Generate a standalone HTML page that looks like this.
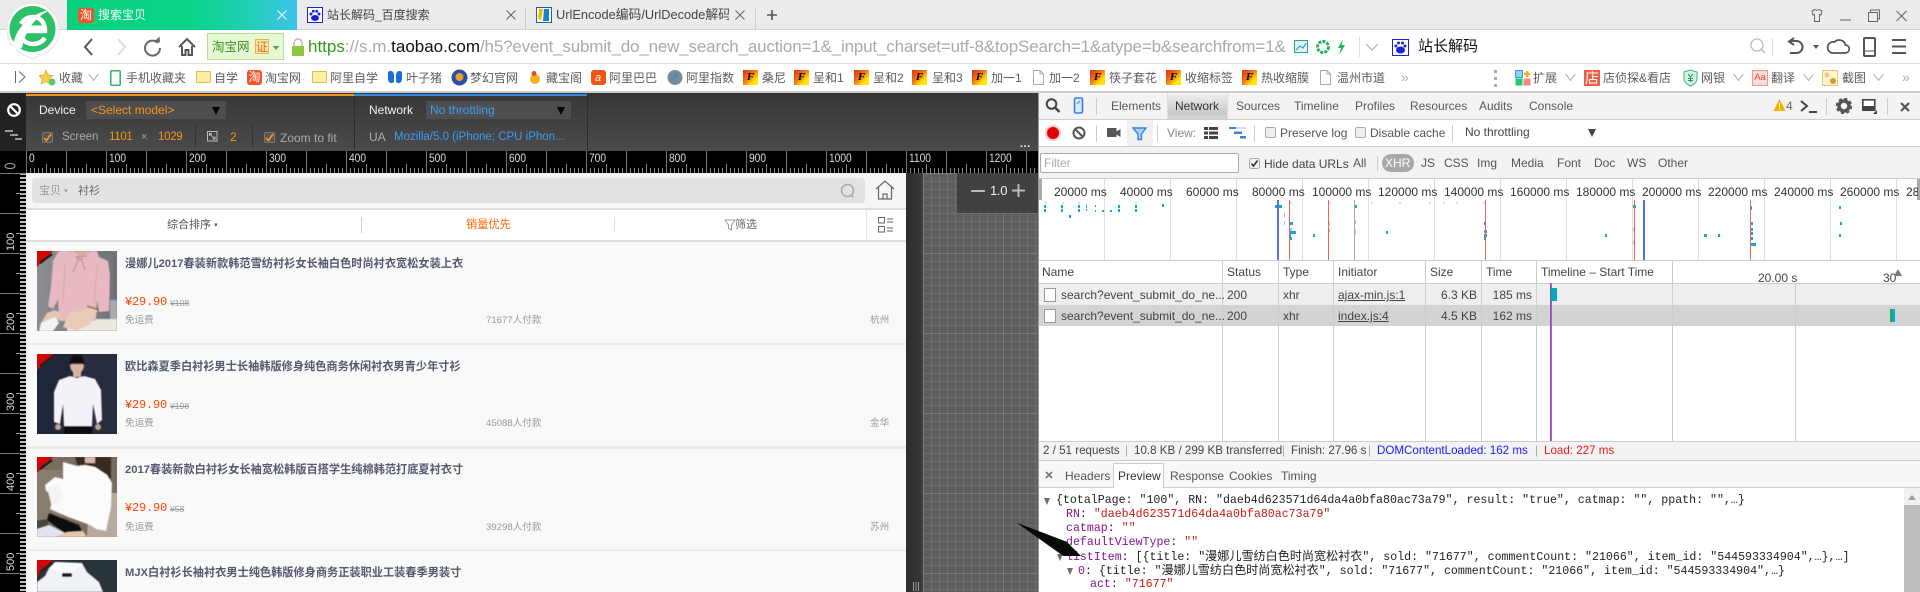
<!DOCTYPE html>
<html lang="zh"><head><meta charset="utf-8"><title>搜索宝贝</title>
<style>
html,body{margin:0;padding:0;width:1920px;height:592px;overflow:hidden;background:#fff}
body{position:relative;font-family:"Liberation Sans","Noto Sans CJK SC",sans-serif;font-size:12px;color:#555}
.a,.t,svg.a{position:absolute}
.t{white-space:nowrap;line-height:16px}
.b{font-size:12px;color:#5c5c5c}
.r{color:#ddd;font-size:12px;top:150px;transform:scaleX(.85);transform-origin:left top}
.v{color:#ddd;font-size:11px;transform:rotate(-90deg);transform-origin:left top;left:3px}
.tab{color:#5a5a5a;top:98px}
.cap{font-size:12px;color:#444}
.st{font-size:11.6px;top:443px;color:#444}
.ttl{font-size:11.2px;font-weight:bold;color:#525a6c;left:125px}
.pr{font-family:"Liberation Mono","Noto Sans CJK SC",monospace;font-size:12px;color:#f40;left:125px;letter-spacing:-.2px}
.op{font-size:8.6px;color:#999;text-decoration:line-through}
.g{font-size:9.6px;color:#999}
.m{font:11.6px/14px "Liberation Mono","Noto Sans CJK SC",monospace;color:#222;white-space:pre;position:absolute}
.m b{font-weight:normal;color:#881391}.m u{text-decoration:none;color:#c41a16}.m span{font-size:12.1px}
.tri{position:absolute;width:0;height:0;border-left:3.5px solid transparent;border-right:3.5px solid transparent;border-top:7px solid #6e6e6e}
.hl{position:absolute;width:1px;background:#ccc}
.sep{position:absolute;width:1px;background:#ccc}
.item{position:absolute;left:26px;width:880px;height:2px;background:#ececec}
.yi{position:absolute;width:15px;height:15px;top:70px;background:linear-gradient(135deg,#e02a10 0,#f47a10 45%,#ffe600 75%);color:#000;font:bold 11px/15px "Liberation Serif",serif;text-align:center;font-style:italic}
.fo{position:absolute;top:71px;width:15px;height:12px;background:#fdf0a0;border:1px solid #dcbc58;border-radius:1px;box-sizing:border-box}
.tb{position:absolute;background:#f0552a;border-radius:3px;color:#fff;font-size:12px;line-height:15px;text-align:center;width:16px;height:15px}
.cv{color:#999;font-size:9px;top:70px;transform:scaleX(1.5)}
</style></head><body>

<!-- tab strip -->
<div class="a" style="left:0;top:0;width:1920px;height:30px;background:#ebebeb;border-bottom:1px solid #d4d4d4;box-sizing:border-box"></div>
<div class="a" style="left:67px;top:0;width:230px;height:30px;background:linear-gradient(90deg,#08d07c 0,#0bd48a 55%,#22cfb8 80%,#3cc3ea 100%)"></div>
<div class="tb" style="left:78px;top:8px">淘</div>
<div class="t" style="left:98px;top:7px;color:#fff">搜索宝贝</div>
<svg class="a" style="left:276px;top:9px" width="12" height="12"><path d="M1.5 1.5l9 9M10.5 1.5l-9 9" stroke="#fff" stroke-width="1"/></svg>
<svg class="a" style="left:307px;top:7px" width="16" height="16"><rect x=".5" y=".5" width="15" height="15" fill="#fff" stroke="#1a23d4"/><g fill="#1a23d4"><ellipse cx="8" cy="11" rx="4" ry="3"/><circle cx="4" cy="7" r="1.5"/><circle cx="12" cy="7" r="1.5"/><circle cx="6.3" cy="4.2" r="1.4"/><circle cx="9.7" cy="4.2" r="1.4"/></g></svg>
<div class="t" style="left:327px;top:7px;color:#444;font-size:12px">站长解码_百度搜索</div>
<svg class="a" style="left:505px;top:9px" width="12" height="12"><path d="M1.5 1.5l9 9M10.5 1.5l-9 9" stroke="#666"/></svg>
<div class="sep" style="left:525px;top:8px;height:22px"></div>
<svg class="a" style="left:536px;top:7px" width="16" height="16"><rect x=".5" y=".5" width="15" height="15" fill="#fff" stroke="#1c5fae"/><path d="M3 2l4 0-2 12-3-3z" fill="#f5b800"/><path d="M8 2l5 0 0 12-6 0z" fill="#1c7fd0"/></svg>
<div class="a" style="left:556px;top:7px;width:173px;height:16px;overflow:hidden"><span class="t" style="left:0;top:0;color:#444;font-size:12.8px">UrlEncode编码/UrlDecode解码</span></div>
<svg class="a" style="left:734px;top:9px" width="12" height="12"><path d="M1.5 1.5l9 9M10.5 1.5l-9 9" stroke="#666"/></svg>
<div class="sep" style="left:755px;top:8px;height:22px"></div>
<svg class="a" style="left:766px;top:9px" width="12" height="12"><path d="M6 1v10M1 6h10" stroke="#555" stroke-width="1.6"/></svg>
<!-- window controls -->
<svg class="a" style="left:1808px;top:8px" width="100" height="16" fill="none" stroke="#666"><path d="M4 3l3-1.5q2 1.5 4 0l3 1.5-1 4-1.5-.5v7h-5v-7l-1.5.5z"/><path d="M32 12h11"/><rect x="60.5" y="4.5" width="9" height="9"/><path d="M62.5 4v-2h9v9h-2"/><path d="M88.5 3l10 10M98.5 3l-10 10"/></svg>

<!-- address bar -->
<div class="a" style="left:0;top:30px;width:1920px;height:34px;background:#fff;border-bottom:1px solid #ddd;box-sizing:border-box"></div>
<svg class="a" style="left:0;top:0" width="62" height="62"><path d="M33 3C18 3 7 15 7 30c0 13 9 23 20 26l6 3 5-3c12-3 21-13 21-26C59 15 48 3 33 3z" fill="#fff" stroke="#e4e4e4"/><circle cx="32.5" cy="29" r="23" fill="#2cc068"/><path d="M21 31h24c0-9-5-14-12-14-5 0-9 2-12 7" fill="none" stroke="#fff" stroke-width="4.5"/><path d="M45 38c-3 4-7 6-12 6-8 0-13-6-13-13" fill="none" stroke="#fff" stroke-width="4.5"/><path d="M12 50C14 30 28 14 50 10 36 17 26 28 22 48z" fill="#fff"/><path d="M24 28h20" stroke="#fff" stroke-width="5"/></svg>
<svg class="a" style="left:80px;top:36px" width="120" height="22" fill="none"><path d="M12 3L5 11l7 8" stroke="#555" stroke-width="2"/><path d="M38 3l7 8-7 8" stroke="#ddd" stroke-width="2"/><path d="M78 7a7.5 7.5 0 1 0 2 5" stroke="#666" stroke-width="2"/><path d="M74 6l6 .5-.5-6" fill="#666"/><path d="M99 11l8-8 8 8M102 10v9h3.5v-5h3v5h3.5v-9" stroke="#555" stroke-width="2"/></svg>
<div class="a" style="left:207px;top:33px;width:77px;height:27px;box-sizing:border-box;background:#e6f8d4;border:1px solid #b5e08e"></div>
<div class="t" style="left:212px;top:39px;color:#38921f;font-size:12.5px">淘宝网</div>
<div class="t" style="left:255px;top:39px;width:14px;height:15px;line-height:15px;font-size:12px;color:#d8691a;background:#fbeab0;border:1px solid #e8b450;text-align:center;box-sizing:border-box">证</div>
<div class="a" style="left:273px;top:46px;border-left:3px solid transparent;border-right:3px solid transparent;border-top:4px solid #5a9a30"></div>
<svg class="a" style="left:290px;top:38px" width="16" height="18"><path d="M4 8V5a4 4 0 0 1 8 0v3" fill="none" stroke="#bbb" stroke-width="1.5"/><rect x="2" y="8" width="12" height="10" fill="#8fc640"/></svg>
<div class="a" style="left:308px;top:36px;width:978px;height:22px;overflow:hidden"><span class="t" style="left:0;top:0;font-size:17px;line-height:22px;color:#aaa"><span style="color:#2f9a1c">https</span>://s.m.<span style="color:#111">taobao.com</span><span style="letter-spacing:-.17px">/h5?event_submit_do_new_search_auction=1&amp;_input_charset=utf-8&amp;topSearch=1&amp;atype=b&amp;searchfrom=1&amp;a</span></span></div>
<svg class="a" style="left:1293px;top:38px" width="56" height="18"><rect x="1.5" y="2.5" width="13" height="12" fill="#dff2f8" stroke="#25a87a"/><path d="M3 12l4-4 3 2 3-5" stroke="#2a8fc8" fill="none"/><circle cx="30" cy="9" r="5.5" fill="none" stroke="#22b063" stroke-width="3" stroke-dasharray="3 1.2"/><path d="M50 1l-5 9h3l-2 7 6-10h-3.5z" fill="#1fb55a"/></svg>
<div class="sep" style="left:1359px;top:37px;height:20px;background:#ddd"></div>
<svg class="a" style="left:1365px;top:42px" width="14" height="10"><path d="M1 2l6 6 6-6" fill="none" stroke="#aaa"/></svg>
<svg class="a" style="left:1392px;top:39px" width="17" height="17"><rect x=".5" y=".5" width="16" height="16" fill="#fff" stroke="#1a23d4"/><g fill="#1a23d4"><ellipse cx="8.5" cy="11" rx="4.5" ry="3.5"/><circle cx="4" cy="7" r="1.5"/><circle cx="13" cy="7" r="1.5"/><circle cx="6.5" cy="4" r="1.5"/><circle cx="10.5" cy="4" r="1.5"/></g></svg>
<div class="t" style="left:1418px;top:39px;color:#111;font-size:15px">站长解码</div>
<svg class="a" style="left:1748px;top:36px" width="165" height="22" fill="none" stroke="#555" stroke-width="2"><circle cx="9" cy="9" r="6" stroke="#bbb" stroke-width="1.3"/><path d="M13 13l4 4" stroke="#bbb" stroke-width="1.3"/><path d="M24.5 2v18" stroke="#ddd" stroke-width="1"/><path d="M43 5h6a5.5 5.5 0 1 1-1 12h-6"/><path d="M46 2l-5 3.5 5 3.5" fill="none"/><path d="M65 9l3 4 3-4z" fill="#555" stroke="none"/><path d="M84 17h13a4 4 0 0 0 .5-8 6.5 6.5 0 0 0-11-3 5 5 0 0 0-2.5 11z" stroke-width="1.7"/><rect x="116" y="2" width="11" height="18" rx="1"/><path d="M116 15h11" stroke-width="1"/><path d="M144 4h14M144 10.5h14M144 17h14"/></svg>

<!-- bookmarks bar -->
<div class="a" style="left:0;top:64px;width:1920px;height:29px;background:#fff;border-bottom:2px solid #ccc;box-sizing:border-box"></div>
<svg class="a" style="left:14px;top:70px" width="12" height="14" fill="none" stroke="#666"><path d="M1.5 1v12M5 1.5l6 5.5-6 5.5"/></svg>
<svg class="a" style="left:39px;top:69px" width="17" height="17"><path d="M7 1l2 5 5 .5-4 3.5 1 5-4-2.500-5 2.500 1.500-5L0 6.500 5 6z" fill="#f6d04a" stroke="#d8ac2a" stroke-width=".7"/><circle cx="13" cy="13" r="3.5" fill="#5fc47a"/></svg>
<div class="t b" style="left:59px;top:70px">收藏</div><div class="t cv" style="left:89px">∨</div>
<svg class="a" style="left:110px;top:70px" width="11" height="16"><rect x=".8" y=".8" width="9.4" height="14.4" rx="1" fill="#fff" stroke="#2cb56a" stroke-width="1.5"/></svg>
<div class="t b" style="left:126px;top:70px">手机收藏夹</div>
<div class="fo" style="left:196px"></div><div class="t b" style="left:214px;top:70px">自学</div>
<div class="tb" style="left:247px;top:70px;width:15px">淘</div><div class="t b" style="left:265px;top:70px">淘宝网</div>
<div class="fo" style="left:312px"></div><div class="t b" style="left:330px;top:70px">阿里自学</div>
<svg class="a" style="left:387px;top:70px" width="16" height="15"><path d="M1 2q4-3 6 2v8q-4 3-6-2zM15 2q-4-3-6 2v8q4 3 6-2z" fill="#1a70d8"/></svg>
<div class="t b" style="left:406px;top:70px">叶子猪</div>
<svg class="a" style="left:451px;top:69px" width="17" height="17"><circle cx="8.5" cy="8.5" r="8" fill="#2a4ea8"/><circle cx="8.5" cy="8" r="4" fill="#e8a020"/></svg>
<div class="t b" style="left:470px;top:70px">梦幻官网</div>
<svg class="a" style="left:527px;top:70px" width="16" height="16"><circle cx="8" cy="9" r="5" fill="#f5b120"/><circle cx="7" cy="3.5" r="2.5" fill="#e84e1c"/></svg>
<div class="t b" style="left:546px;top:70px">藏宝阁</div>
<div class="a" style="left:591px;top:70px;width:15px;height:15px;background:#f0560f;border-radius:3px"></div>
<div class="t" style="left:595px;top:70px;color:#fff;font-size:11px;font-style:italic">a</div>
<div class="t b" style="left:609px;top:70px">阿里巴巴</div>
<svg class="a" style="left:667px;top:69px" width="16" height="17"><circle cx="8" cy="8.5" r="7.5" fill="#7c8a96"/><path d="M4 12l5-8 2 2z" fill="#1c8fd8"/></svg>
<div class="t b" style="left:686px;top:70px">阿里指数</div>
<div class="yi" style="left:743px">F</div><div class="t b" style="left:762px;top:70px">桑尼</div>
<div class="yi" style="left:794px">F</div><div class="t b" style="left:813px;top:70px">呈和1</div>
<div class="yi" style="left:854px">F</div><div class="t b" style="left:873px;top:70px">呈和2</div>
<div class="yi" style="left:912px">F</div><div class="t b" style="left:932px;top:70px">呈和3</div>
<div class="yi" style="left:972px">F</div><div class="t b" style="left:991px;top:70px">加一1</div>
<svg class="a" style="left:1033px;top:70px" width="11" height="15" fill="#fff" stroke="#aaa"><path d="M.5.5h6.5l3.500 3.500v10.500H.5zM7 .5V4h3.500"/></svg>
<div class="t b" style="left:1049px;top:70px">加一2</div>
<div class="yi" style="left:1090px">F</div><div class="t b" style="left:1109px;top:70px">筷子套花</div>
<div class="yi" style="left:1166px">F</div><div class="t b" style="left:1185px;top:70px">收缩标签</div>
<div class="yi" style="left:1242px">F</div><div class="t b" style="left:1261px;top:70px">热收缩膜</div>
<svg class="a" style="left:1320px;top:70px" width="11" height="15" fill="#fff" stroke="#aaa"><path d="M.5.5h6.500l3.500 3.500v10.500H.5zM7 .5V4h3.500"/></svg>
<div class="t b" style="left:1337px;top:70px">温州市道</div>
<div class="t" style="left:1401px;top:69px;color:#aaa;font-size:14px">»</div>
<svg class="a" style="left:1494px;top:69px" width="4" height="18" fill="#aaa"><rect y="1" width="3" height="3"/><rect y="8" width="3" height="3"/><rect y="15" width="3" height="3"/></svg>
<svg class="a" style="left:1515px;top:70px" width="16" height="16"><rect x=".5" y=".5" width="7" height="7" fill="#8fd0f5" stroke="#2a9ee0"/><rect x=".5" y="8.5" width="7" height="7" fill="#28c76a"/><rect x="8.5" y="8.5" width="7" height="7" fill="#f58a7a"/><path d="M9 4h6M12 1v6" stroke="#f0b020" stroke-width="2.5"/></svg>
<div class="t b" style="left:1533px;top:70px">扩展</div><div class="t cv" style="left:1566px">∨</div>
<div class="t" style="left:1584px;top:70px;width:16px;height:16px;background:#ee5d4a;color:#fff;font-size:14px;text-align:center">店</div>
<div class="t b" style="left:1603px;top:70px">店侦探&amp;看店</div>
<svg class="a" style="left:1683px;top:69px" width="15" height="18"><path d="M7.5 1l6.5 2v7q0 4-6.5 7Q1 14 1 10V3z" fill="#d8f5e4" stroke="#3db87e"/><path d="M5 5l2.5 3L10 5M7.5 8v5M5 9.5h5M5 11.5h5" fill="none" stroke="#1c9c60"/></svg>
<div class="t b" style="left:1701px;top:70px">网银</div><div class="t cv" style="left:1734px">∨</div>
<div class="t" style="left:1752px;top:70px;width:16px;height:16px;background:#fbdcd8;border:1px solid #e59a92;box-sizing:border-box;color:#d14a40;font-size:9.5px;line-height:14px;text-align:center">Aa</div>
<div class="t b" style="left:1771px;top:70px">翻译</div><div class="t cv" style="left:1804px">∨</div>
<svg class="a" style="left:1822px;top:70px" width="16" height="16"><rect x=".5" y=".5" width="15" height="15" fill="#fdf3d8" stroke="#f0a830" stroke-dasharray="2 1"/><circle cx="5" cy="5" r="2.5" fill="#f5c870"/><circle cx="11" cy="11" r="3" fill="#d89a30"/></svg>
<div class="t b" style="left:1842px;top:70px">截图</div><div class="t cv" style="left:1874px">∨</div>
<div class="t" style="left:1902px;top:69px;color:#aaa;font-size:14px">»</div>

<!-- device emulation bar -->
<div class="a" style="left:0;top:93px;width:26px;height:58px;background:#222"></div>
<div class="a" style="left:26px;top:93px;width:1012px;height:58px;background:linear-gradient(#363636,#4b4b4b)"></div>
<div class="a" style="left:26px;top:94px;width:328px;height:2px;background:#f7941e"></div>
<div class="a" style="left:354px;top:94px;width:233px;height:2px;background:#2e8de6"></div>
<div class="a" style="left:354px;top:96px;width:1px;height:54px;background:#2c2c2c"></div>
<div class="a" style="left:587px;top:94px;width:1px;height:56px;background:#2c2c2c"></div>
<svg class="a" style="left:6px;top:102px" width="16" height="16" fill="none" stroke="#fff" stroke-width="2.2"><circle cx="8" cy="8" r="5.8"/><path d="M4 4l8 8"/></svg>
<svg class="a" style="left:5px;top:130px" width="18" height="13" fill="#999"><rect width="8" height="2"/><rect x="5" y="4" width="8" height="2"/><rect x="10" y="8" width="7" height="2"/></svg>
<div class="t" style="left:39px;top:102px;color:#f2f2f2;font-size:12px">Device</div>
<div class="a" style="left:86px;top:101px;width:140px;height:18px;background:#4e4e4e"></div>
<div class="t" style="left:91px;top:102px;color:#f7931e;font-size:12px">&lt;Select model&gt;</div>
<div class="a" style="left:212px;top:107px;border-left:4px solid transparent;border-right:4px solid transparent;border-top:8px solid #000"></div>
<svg class="a" style="left:42px;top:132px" width="12" height="12"><rect x=".5" y=".5" width="10" height="10" rx="1.5" fill="#555" stroke="#777"/><path d="M2 6l2.5 2.5L9 2" fill="none" stroke="#f7931e" stroke-width="1.8"/></svg>
<div class="t" style="left:62px;top:129px;color:#aaa;font-size:11.5px">Screen</div>
<div class="t" style="left:109px;top:129px;color:#f7931e;font-size:11.5px;letter-spacing:-.3px">1101</div>
<div class="t" style="left:141px;top:129px;color:#aaa;font-size:11px">×</div>
<div class="t" style="left:158px;top:129px;color:#f7931e;font-size:11.5px;letter-spacing:-.3px">1029</div>
<div class="a" style="left:195px;top:125px;width:1px;height:23px;background:#333"></div>
<svg class="a" style="left:207px;top:131px" width="11" height="11" fill="none" stroke="#bbb"><rect x=".5" y=".5" width="9.5" height="9.5"/><path d="M2.5 2.5l5 5M2.5 5V2.5H5M8 5.5V8H5.5"/></svg>
<div class="t" style="left:230px;top:129px;color:#f7931e;font-size:12px">2</div>
<div class="a" style="left:252px;top:125px;width:1px;height:23px;background:#333"></div>
<svg class="a" style="left:264px;top:132px" width="12" height="12"><rect x=".5" y=".5" width="10" height="10" rx="1.5" fill="#555" stroke="#777"/><path d="M2 6l2.5 2.5L9 2" fill="none" stroke="#f7931e" stroke-width="1.8"/></svg>
<div class="t" style="left:280px;top:130px;color:#aaa;font-size:12px">Zoom to fit</div>
<div class="t" style="left:369px;top:102px;color:#f2f2f2;font-size:12px">Network</div>
<div class="a" style="left:426px;top:101px;width:145px;height:18px;background:#4e4e4e"></div>
<div class="t" style="left:430px;top:102px;color:#3d9cf5;font-size:12px">No throttling</div>
<div class="a" style="left:557px;top:107px;border-left:4px solid transparent;border-right:4px solid transparent;border-top:8px solid #000"></div>
<div class="t" style="left:369px;top:129px;color:#aaa;font-size:12px">UA</div>
<div class="t" style="left:394px;top:129px;color:#3d9cf5;font-size:11.5px">Mozilla/5.0 (iPhone; CPU iPhon...</div>
<div class="t" style="left:1020px;top:136px;color:#eee;font-size:11px;letter-spacing:.5px;font-weight:bold">...</div>

<!-- rulers -->
<div class="a" style="left:0;top:151px;width:1038px;height:22px;background:#000"></div>
<div class="a" style="left:26px;top:151px;width:1012px;height:22px;background:linear-gradient(90deg,#777 1px,transparent 1px) 0 0/40px 100% repeat-x,linear-gradient(90deg,#888 1px,transparent 1px) 0 100%/20px 9px repeat-x,linear-gradient(90deg,#888 1px,transparent 1px) 0 100%/4px 5px repeat-x"></div>
<span class="t r" style="left:29px">0</span><span class="t r" style="left:109px">100</span><span class="t r" style="left:189px">200</span><span class="t r" style="left:269px">300</span><span class="t r" style="left:349px">400</span><span class="t r" style="left:429px">500</span><span class="t r" style="left:509px">600</span><span class="t r" style="left:589px">700</span><span class="t r" style="left:669px">800</span><span class="t r" style="left:749px">900</span><span class="t r" style="left:829px">1000</span><span class="t r" style="left:909px">1100</span><span class="t r" style="left:989px">1200</span>
<svg class="a" style="left:3px;top:162px" width="16" height="8"><ellipse cx="7" cy="4" rx="5" ry="2.5" fill="none" stroke="#aaa"/></svg>
<div class="a" style="left:0;top:173px;width:26px;height:419px;background:linear-gradient(#777 1px,transparent 1px) 0 0/100% 40px repeat-y,linear-gradient(#999 1px,transparent 1px) 100% 0/10px 20px repeat-y,linear-gradient(#bbb 2px,transparent 2px) 100% 0/6px 4px repeat-y,#000"></div>
<span class="t v" style="top:251px">100</span><span class="t v" style="top:331px">200</span><span class="t v" style="top:411px">300</span><span class="t v" style="top:491px">400</span><span class="t v" style="top:571px">500</span>

<!-- emulated page -->
<div class="a" style="left:26px;top:173px;width:880px;height:419px;background:#f9f9f9"></div>
<div class="a" style="left:26px;top:173px;width:880px;height:35px;background:#f6f6f6;border-bottom:2px solid #ddd"></div>
<div class="a" style="left:32px;top:178px;width:833px;height:25px;background:#e2e2e4;border-radius:3px"></div>
<div class="t" style="left:39px;top:183px;color:#999;font-size:11px">宝贝 <span style="font-size:7px;vertical-align:1px">▾</span></div>
<div class="t" style="left:78px;top:183px;color:#666;font-size:11px">衬衫</div>
<svg class="a" style="left:840px;top:183px" width="16" height="16" fill="none" stroke="#aaa" stroke-width="1.5"><circle cx="7.5" cy="7.5" r="6"/><path d="M11 12l2.5 2.5"/></svg>
<svg class="a" style="left:875px;top:180px" width="20" height="20" fill="none" stroke="#666" stroke-width="1.2"><path d="M1 9l9-8 9 8M3.5 7v12h13V7M8 19v-5h4v5"/></svg>
<div class="a" style="left:26px;top:210px;width:880px;height:30px;background:#fff;border-bottom:2px solid #ddd"></div>
<div class="t" style="left:167px;top:217px;color:#555;font-size:11px">综合排序 <span style="font-size:7px;vertical-align:1px">▾</span></div>
<div class="t" style="left:466px;top:217px;color:#f60;font-size:11.2px">销量优先</div>
<svg class="a" style="left:724px;top:219px" width="12" height="12" fill="none" stroke="#999"><path d="M1 1h10L7.5 6v5l-3-1.5V6z"/></svg>
<div class="t" style="left:735px;top:217px;color:#666;font-size:11px">筛选</div>
<div class="a" style="left:361px;top:217px;width:1px;height:16px;background:#ccc"></div>
<div class="a" style="left:614px;top:217px;width:1px;height:16px;background:#ddd"></div>
<div class="a" style="left:866px;top:210px;width:1px;height:30px;background:#e5e5e5"></div>
<svg class="a" style="left:878px;top:217px" width="16" height="16" fill="none" stroke="#666"><rect x=".5" y=".5" width="6" height="5.5"/><rect x=".5" y="9.5" width="6" height="5.5"/><path d="M9 2h6M9 5h6M9 11h6M9 14h6"/></svg>

<div class="item" style="top:343px"></div><div class="item" style="top:446px;height:3px"></div><div class="item" style="top:549px"></div>

<!-- product images -->
<svg class="a" style="left:37px;top:251px" width="80" height="80" viewBox="0 0 80 80"><defs><linearGradient id="g1" x1="0" x2="1"><stop offset="0" stop-color="#8b8d92"/><stop offset="1" stop-color="#6f7277"/></linearGradient><filter id="bl" x="-5%" y="-5%" width="110%" height="110%"><feGaussianBlur stdDeviation=".6"/></filter></defs><rect width="80" height="80" fill="url(#g1)"/><g filter="url(#bl)"><rect x="73" y="49" width="7" height="20" fill="#a8aaad"/><rect x="30" y="68" width="50" height="12" fill="#ece8e2"/><path d="M31 0h29l2 6 9 4 2 14-1 36-10 1-2-12-1 21H22l-1-22-5 10-5-3 3-20 2-25 5-9 10-3z" fill="#e8b9c1"/><path d="M36 0l9 7 9-7z" fill="#d9ab9d"/><path d="M42 7l-6 14M44 7l4 12M44 9l-5-3 11-1" stroke="#b98490" fill="none"/><path d="M60 14l-3 44M28 12l-2 40" stroke="#d8a4ae" fill="none"/><path d="M4 72l6-10 8-3 6 3-4 10-8 6z" fill="#e4c7b2"/><path d="M26 76l6-14 10-2 12-3 7 2-8 14-14 7z" fill="#e8ccb8"/><path d="M2 80l2-8 14-6 4 6-6 8z" fill="#f4f4f4"/><path d="M50 55l12 4" stroke="#8a6a4a" stroke-width="1.5"/></g></svg>
<svg class="a" style="left:37px;top:354px" width="80" height="80" viewBox="0 0 80 80"><rect width="80" height="80" fill="#20263a"/><rect x="40" width="40" height="80" fill="#2b3040" opacity=".7"/><g filter="url(#bl)"><path d="M33 10q0 9 7 9t7-9z" fill="#d8b49c"/><path d="M33 11q-1-10 7-10t7 10q-7-5-14 0z" fill="#0c0c0c"/><rect x="36" y="17" width="8" height="6" fill="#d8b49c"/><path d="M33 22l7 2 7-2 11 3 6 11 1 30-5 4-4-20-1 22H27l-1-22-3 20-6-2V38l5-12z" fill="#f5f1f8"/><rect x="27" y="72" width="28" height="8" fill="#111"/><circle cx="21" cy="73" r="3" fill="#c8a084"/><circle cx="61" cy="73" r="3" fill="#c8a084"/></g></svg>
<svg class="a" style="left:37px;top:457px" width="80" height="80" viewBox="0 0 80 80"><rect width="80" height="80" fill="#7a6d60"/><rect x="0" y="13" width="25" height="50" fill="#8a7d6e"/><path d="M52 36h28v44H50z" fill="#b5aa9b"/><g filter="url(#bl)"><path d="M38 0h36v22H44z" fill="#3a2a22"/><rect x="48" y="0" width="10" height="6" fill="#d8b8a4"/><path d="M26 5l14 4 8-1 10 2 12 8 5 8-1 24-5 24-10-2-6-4-22-8-18-8 4-14-8-4-1-6 10-8 8 2z" fill="#fbfbfb"/><path d="M10 30l10-3 6 10-4 10-8 0z" fill="#f4f4f4"/><path d="M12 56l30 12 6 12h-14l-8-5-16-12z" fill="#0e0e0e"/><path d="M0 72l12-4 16 8 4 4H0z" fill="#e4e4f0"/><path d="M18 80l12-5 16-1 4 6z" fill="#e8c6ad"/><path d="M0 64l10-2 2 6-12 4z" fill="#444"/></g></svg>
<div class="a" style="left:37px;top:560px;width:80px;height:32px;overflow:hidden"><svg style="display:block" width="80" height="32" viewBox="0 0 80 32"><rect width="80" height="32" fill="#28343a"/><g filter="url(#bl)"><path d="M0 32V22l8-6 4-8 6-6 27 1 5 9 12 10 4 10z" fill="#f1f1f8"/><path d="M14 8l11 6 10-1 10-9-3-1-24-1z" fill="#fbfbff"/><rect x="25" y="13" width="10" height="4" fill="#1a1a1a"/></g></svg></div>
<!-- badges -->
<svg class="a" style="left:37px;top:251px" width="17" height="17"><path d="M0 0h16L0 16z" fill="#d40404"/><path d="M3 12L15 3" stroke="#222" stroke-width="2.5"/></svg>
<svg class="a" style="left:37px;top:354px" width="17" height="17"><path d="M0 0h16L0 16z" fill="#d40404"/><path d="M3 12L15 3" stroke="#222" stroke-width="2.5"/></svg>
<svg class="a" style="left:37px;top:457px" width="17" height="17"><path d="M0 0h16L0 16z" fill="#d40404"/><path d="M3 12L15 3" stroke="#222" stroke-width="2.5"/></svg>
<svg class="a" style="left:37px;top:560px" width="17" height="17"><path d="M0 0h16L0 16z" fill="#d40404"/><path d="M3 12L15 3" stroke="#222" stroke-width="2.5"/></svg>

<!-- item text -->
<div class="t ttl" style="top:256px">漫娜儿2017春装新款韩范雪纺衬衫女长袖白色时尚衬衣宽松女装上衣</div>
<div class="t pr" style="top:294px">¥29.90</div><div class="t op" style="left:170px;top:295px">¥108</div>
<div class="t g" style="left:125px;top:313px">免运费</div><div class="t g" style="left:486px;top:313px">71677人付款</div><div class="t g" style="left:870px;top:313px">杭州</div>
<div class="t ttl" style="top:359px">欧比森夏季白衬衫男士长袖韩版修身纯色商务休闲衬衣男青少年寸衫</div>
<div class="t pr" style="top:397px">¥29.90</div><div class="t op" style="left:170px;top:398px">¥198</div>
<div class="t g" style="left:125px;top:416px">免运费</div><div class="t g" style="left:486px;top:416px">45088人付款</div><div class="t g" style="left:870px;top:416px">金华</div>
<div class="t ttl" style="top:462px">2017春装新款白衬衫女长袖宽松韩版百搭学生纯棉韩范打底夏衬衣寸</div>
<div class="t pr" style="top:500px">¥29.90</div><div class="t op" style="left:170px;top:501px">¥58</div>
<div class="t g" style="left:125px;top:520px">免运费</div><div class="t g" style="left:486px;top:520px">39298人付款</div><div class="t g" style="left:870px;top:520px">苏州</div>
<div class="t ttl" style="top:565px">MJX白衬衫长袖衬衣男士纯色韩版修身商务正装职业工装春季男装寸</div>

<!-- dark gutter + grid -->
<div class="a" style="left:906px;top:173px;width:17px;height:419px;background:linear-gradient(90deg,#2d2d2d,#363636 80%,#444)"></div>
<div class="a" style="left:913px;top:582px;width:7px;height:9px;background:repeating-linear-gradient(90deg,#999 0 1px,transparent 1px 2.5px)"></div>
<div class="a" style="left:923px;top:173px;width:115px;height:419px;background:linear-gradient(90deg,#7a7a7a 1px,transparent 1px) 0 0/80px 100%,linear-gradient(#7a7a7a 1px,transparent 1px) 0 0/100% 80px,linear-gradient(90deg,#6e6e6e 1px,transparent 1px) 0 0/8px 100%,linear-gradient(#6e6e6e 1px,transparent 1px) 0 0/100% 8px,#5e5e5e"></div>
<div class="a" style="left:957px;top:173px;width:81px;height:40px;background:#414141"></div>
<div class="a" style="left:971px;top:190px;width:14px;height:2px;background:#bbb"></div>
<div class="t" style="left:990px;top:183px;color:#eee;font-size:13px;letter-spacing:-.3px">1.0</div>
<svg class="a" style="left:1012px;top:184px" width="13" height="13"><path d="M6.5 0v13M0 6.500h13" stroke="#bbb" stroke-width="2"/></svg>

<!-- devtools -->
<div class="a" style="left:1038px;top:93px;width:882px;height:499px;background:#fff;border-left:1px solid #999;box-sizing:border-box"></div>
<div class="a" style="left:1039px;top:93px;width:881px;height:27px;background:#f3f3f3;border-bottom:1px solid #ccc;box-sizing:border-box"></div>
<div class="a" style="left:1167px;top:93px;width:61px;height:26px;background:linear-gradient(#f0f0f0,#c8c8c8 80%,#d8d8d8);border-left:1px solid #ddd;border-right:1px solid #ddd;box-sizing:border-box"></div>
<svg class="a" style="left:1045px;top:97px" width="46" height="19" fill="none"><circle cx="6.5" cy="7" r="4.8" stroke="#444" stroke-width="2"/><path d="M10 10.5l4.5 4.5" stroke="#444" stroke-width="2.5"/><rect x="29.5" y="1" width="8" height="15" rx="1.5" stroke="#3a80e0" stroke-width="1.6" fill="#dbe8fb"/><path d="M32 7l3-3" stroke="#3a80e0"/></svg>
<div class="sep" style="left:1096px;top:98px;height:17px"></div>
<span class="t tab" style="left:1111px">Elements</span><span class="t tab" style="left:1175px;color:#333">Network</span><span class="t tab" style="left:1236px">Sources</span><span class="t tab" style="left:1294px">Timeline</span><span class="t tab" style="left:1355px">Profiles</span><span class="t tab" style="left:1410px">Resources</span><span class="t tab" style="left:1479px">Audits</span><span class="t tab" style="left:1529px">Console</span>
<svg class="a" style="left:1773px;top:98px" width="14" height="14"><path d="M6.5 1l6 12H.5z" fill="#f0b400"/><path d="M6.5 5v4.500M6.500 10.500v1.500" stroke="#fff"/></svg>
<div class="t" style="left:1786px;top:98px;color:#666">4</div>
<svg class="a" style="left:1800px;top:99px" width="20" height="14" fill="none" stroke="#444" stroke-width="2"><path d="M1 2l6 5-6 5M9 13h8"/></svg>
<div class="sep" style="left:1826px;top:98px;height:17px"></div>
<svg class="a" style="left:1836px;top:98px" width="16" height="16"><circle cx="8" cy="8" r="5" fill="none" stroke="#555" stroke-width="3.5"/><circle cx="8" cy="8" r="7" fill="none" stroke="#555" stroke-width="2.5" stroke-dasharray="3 2.5"/></svg>
<svg class="a" style="left:1862px;top:99px" width="16" height="15"><rect x=".8" y=".8" width="12" height="10" fill="#fff" stroke="#444" stroke-width="1.6"/><rect y="7" width="13.5" height="5" fill="#444"/><path d="M15 11v4h-4z" fill="#444"/></svg>
<div class="sep" style="left:1887px;top:98px;height:17px"></div>
<svg class="a" style="left:1899px;top:101px" width="12" height="12"><path d="M2 2l8 8M10 2l-8 8" stroke="#555" stroke-width="2.2"/></svg>

<!-- toolbar -->
<div class="a" style="left:1127px;top:120px;width:26px;height:26px;background:#f0f0f0"></div>
<svg class="a" style="left:1044px;top:124px" width="50" height="18"><circle cx="9" cy="9" r="8" fill="#f8c8c8"/><circle cx="9" cy="9" r="6" fill="#e30000"/><circle cx="35" cy="9" r="5.5" fill="none" stroke="#555" stroke-width="2"/><path d="M31 5l8 8" stroke="#555" stroke-width="2"/></svg>
<div class="sep" style="left:1096px;top:125px;height:17px"></div>
<svg class="a" style="left:1107px;top:127px" width="14" height="12"><rect y="1" width="9.5" height="9" fill="#555"/><path d="M9.5 4.5l4-2.5v8l-4-2.5z" fill="#555"/></svg>
<svg class="a" style="left:1132px;top:127px" width="16" height="14"><path d="M1 1h13L9.5 7v5.5H6V7z" fill="#a9d0fb" stroke="#3a80e0" stroke-width="1.4"/></svg>
<div class="sep" style="left:1157px;top:125px;height:17px"></div>
<div class="t" style="left:1167px;top:125px;color:#888">View:</div>
<svg class="a" style="left:1204px;top:127px" width="44" height="13"><g fill="#444"><rect width="4" height="3"/><rect x="5" width="9" height="3"/><rect y="4.5" width="4" height="3"/><rect x="5" y="4.5" width="9" height="3"/><rect y="9" width="4" height="3"/><rect x="5" y="9" width="9" height="3"/></g><g fill="#3a80e0"><rect x="25" width="7" height="2"/><rect x="30" y="4.5" width="8" height="2.5"/><rect x="36" y="9" width="6" height="2.5"/></g><rect x="32" width="10" height="2" fill="#cfe0f6"/></svg>
<div class="sep" style="left:1254px;top:125px;height:17px"></div>
<div class="a" style="left:1265px;top:127px;width:11px;height:11px;background:#eee;border:1px solid #aaa;border-radius:2px;box-sizing:border-box"></div>
<div class="t" style="left:1280px;top:125px;color:#555">Preserve log</div>
<div class="a" style="left:1355px;top:127px;width:11px;height:11px;background:#eee;border:1px solid #aaa;border-radius:2px;box-sizing:border-box"></div>
<div class="t" style="left:1370px;top:125px;color:#555">Disable cache</div>
<div class="sep" style="left:1452px;top:125px;height:17px"></div>
<div class="t" style="left:1465px;top:124px;color:#444">No throttling</div>
<div class="a" style="left:1588px;top:129px;border-left:4px solid transparent;border-right:4px solid transparent;border-top:8px solid #444"></div>

<!-- filter -->
<div class="a" style="left:1039px;top:146px;width:881px;height:33px;background:#f3f3f3;border-top:1px solid #ccc;border-bottom:1px solid #ccc;box-sizing:border-box"></div>
<div class="a" style="left:1040px;top:153px;width:199px;height:20px;background:#fff;border:1px solid #aaa;border-radius:2px;box-sizing:border-box"></div>
<div class="t" style="left:1044px;top:155px;color:#aaa">Filter</div>
<svg class="a" style="left:1249px;top:158px" width="11" height="11"><rect x=".5" y=".5" width="10" height="10" rx="2" fill="#eee" stroke="#aaa"/><path d="M2.5 5.5l2 2.5 4-5.5" fill="none" stroke="#333" stroke-width="1.5"/></svg>
<div class="t" style="left:1264px;top:156px;color:#444">Hide data URLs</div>
<div class="t" style="left:1353px;top:155px;color:#555">All</div>
<div class="sep" style="left:1377px;top:156px;height:15px"></div>
<div class="a" style="left:1382px;top:154px;width:32px;height:18px;background:#a8a8a8;border-radius:9px"></div>
<div class="t" style="left:1385px;top:155px;color:#fff">XHR</div>
<span class="t cap" style="left:1421px;top:155px;color:#555">JS</span><span class="t cap" style="left:1444px;top:155px;color:#555">CSS</span><span class="t cap" style="left:1477px;top:155px;color:#555">Img</span><span class="t cap" style="left:1511px;top:155px;color:#555">Media</span><span class="t cap" style="left:1557px;top:155px;color:#555">Font</span><span class="t cap" style="left:1594px;top:155px;color:#555">Doc</span><span class="t cap" style="left:1627px;top:155px;color:#555">WS</span><span class="t cap" style="left:1658px;top:155px;color:#555">Other</span>

<!-- overview -->
<svg class="a" style="left:1039px;top:179px" width="881" height="81" fill="#16a9c8">
<g fill="#ddd"><rect x="65" width="1" height="81"/><rect x="131" width="1" height="81"/><rect x="197" width="1" height="81"/><rect x="263" width="1" height="81"/><rect x="329" width="1" height="81"/><rect x="395" width="1" height="81"/><rect x="461" width="1" height="81"/><rect x="527" width="1" height="81"/><rect x="593" width="1" height="81"/><rect x="659" width="1" height="81"/><rect x="725" width="1" height="81"/><rect x="791" width="1" height="81"/><rect x="857" width="1" height="81"/></g>
<rect x="0" y="0" width="3" height="21" fill="#aaa"/><rect x="878" y="0" width="3" height="21" fill="#aaa"/>
<g fill="#ddd"><rect x="6" y="23" width="2" height="2"/><rect x="23" y="23" width="2" height="2"/><rect x="39" y="23" width="2" height="2"/><rect x="96" y="23" width="2" height="2"/><rect x="238" y="23" width="2" height="2"/><rect x="251" y="23" width="2" height="2"/><rect x="290" y="23" width="2" height="2"/><rect x="332" y="23" width="2" height="2"/><rect x="360" y="23" width="2" height="2"/><rect x="390" y="23" width="2" height="2"/><rect x="404" y="23" width="2" height="2"/><rect x="417" y="23" width="2" height="2"/><rect x="444" y="23" width="2" height="2"/></g>
<rect x="5" y="26" width="2" height="3"/><rect x="5" y="30" width="2" height="3"/><rect x="22" y="26" width="2" height="3"/><rect x="22" y="30" width="2" height="3"/><rect x="30" y="36" width="2" height="3"/><rect x="39" y="26" width="2" height="3"/><rect x="39" y="30" width="2" height="3"/><rect x="47" y="26" width="1" height="3"/><rect x="47" y="30" width="1" height="2"/><rect x="56" y="26" width="1" height="2"/><rect x="56" y="31" width="1" height="2"/><rect x="63" y="31" width="2" height="2"/><rect x="71" y="31" width="2" height="2"/><rect x="79" y="26" width="2" height="3"/><rect x="79" y="30" width="2" height="3"/><rect x="96" y="30" width="2" height="3"/><rect x="96" y="26" width="2" height="3"/><rect x="123" y="25" width="2" height="3"/>
<rect x="236" y="26" width="3" height="3"/><rect x="240" y="26" width="3" height="3"/><rect x="245" y="34" width="1" height="4" fill="#9cc"/><rect x="245" y="42" width="1" height="4" fill="#9cc"/><rect x="251" y="43" width="3" height="3"/><rect x="250" y="49" width="3" height="3" fill="#9cc"/><rect x="251" y="52" width="6" height="3"/><rect x="250" y="55" width="2" height="3"/><rect x="251" y="58" width="2" height="3"/><rect x="274" y="55" width="2" height="3"/><rect x="289" y="43" width="2" height="3" fill="#9cc"/><rect x="289" y="50" width="2" height="3" fill="#9cc"/><rect x="315" y="26" width="3" height="3"/><rect x="315" y="41" width="2" height="4" fill="#9cc"/><rect x="315" y="51" width="2" height="4" fill="#9cc"/><rect x="347" y="52" width="2" height="3"/>
<rect x="445" y="43" width="2" height="3"/><rect x="445" y="51" width="3" height="3"/><rect x="445" y="55" width="3" height="3"/><rect x="445" y="58" width="2" height="3"/><rect x="566" y="55" width="2" height="3"/><rect x="594" y="26" width="3" height="3"/><rect x="594" y="49" width="2" height="3" fill="#9cc"/><rect x="594" y="62" width="2" height="3" fill="#9cc"/><rect x="604" y="43" width="2" height="3"/><rect x="604" y="51" width="2" height="3" fill="#9cc"/><rect x="604" y="58" width="2" height="3" fill="#9cc"/><rect x="665" y="55" width="3" height="3"/><rect x="679" y="55" width="2" height="3"/><rect x="711" y="27" width="2" height="4"/><rect x="711" y="43" width="3" height="3"/><rect x="711" y="49" width="3" height="3"/><rect x="711" y="53" width="3" height="3"/><rect x="711" y="58" width="3" height="3"/><rect x="711" y="64" width="6" height="3"/><rect x="800" y="27" width="2" height="3"/><rect x="801" y="43" width="2" height="3"/><rect x="800" y="55" width="2" height="3"/>
<g fill="#f06060"><rect x="250" y="21" width="1" height="60"/><rect x="289" y="21" width="1" height="60"/><rect x="446" y="21" width="1" height="60"/><rect x="595" y="21" width="1" height="60"/><rect x="711" y="21" width="1" height="60"/></g>
<rect x="315" y="21" width="1" height="60" fill="#aaa"/>
<rect x="238" y="21" width="2" height="60" fill="#6a6ae0"/><rect x="604" y="21" width="2" height="60" fill="#5a6ae8"/>
</svg>
<span class="t" style="left:1054px;top:184px;color:#333">20000 ms</span><span class="t" style="left:1120px;top:184px;color:#333">40000 ms</span><span class="t" style="left:1186px;top:184px;color:#333">60000 ms</span><span class="t" style="left:1252px;top:184px;color:#333">80000 ms</span><span class="t" style="left:1312px;top:184px;color:#333">100000 ms</span><span class="t" style="left:1378px;top:184px;color:#333">120000 ms</span><span class="t" style="left:1444px;top:184px;color:#333">140000 ms</span><span class="t" style="left:1510px;top:184px;color:#333">160000 ms</span><span class="t" style="left:1576px;top:184px;color:#333">180000 ms</span><span class="t" style="left:1642px;top:184px;color:#333">200000 ms</span><span class="t" style="left:1708px;top:184px;color:#333">220000 ms</span><span class="t" style="left:1774px;top:184px;color:#333">240000 ms</span><span class="t" style="left:1840px;top:184px;color:#333">260000 ms</span><span class="t" style="left:1906px;top:184px;color:#333;width:12px;overflow:hidden">28</span>

<!-- table -->
<div class="a" style="left:1039px;top:260px;width:881px;height:24px;background:#fff;border-top:1px solid #ccc;border-bottom:1px solid #ccc;box-sizing:border-box"></div>
<div class="a" style="left:1039px;top:284px;width:881px;height:21px;background:#eee"></div>
<div class="a" style="left:1039px;top:305px;width:881px;height:21px;background:#d3d3d3"></div>
<div class="hl" style="left:1222px;top:260px;height:182px"></div><div class="hl" style="left:1278px;top:260px;height:182px"></div><div class="hl" style="left:1333px;top:260px;height:182px"></div><div class="hl" style="left:1425px;top:260px;height:182px"></div><div class="hl" style="left:1481px;top:260px;height:182px"></div><div class="hl" style="left:1536px;top:260px;height:182px"></div><div class="hl" style="left:1672px;top:260px;height:182px"></div><div class="hl" style="left:1795px;top:283px;height:159px"></div>
<span class="t cap" style="left:1042px;top:264px">Name</span><span class="t cap" style="left:1227px;top:264px">Status</span><span class="t cap" style="left:1283px;top:264px">Type</span><span class="t cap" style="left:1338px;top:264px">Initiator</span><span class="t cap" style="left:1430px;top:264px">Size</span><span class="t cap" style="left:1486px;top:264px">Time</span><span class="t cap" style="left:1541px;top:264px">Timeline – Start Time</span><span class="t cap" style="left:1758px;top:270px">20.00 s</span><span class="t cap" style="left:1883px;top:270px">30</span>
<div class="a" style="left:1894px;top:269px;border-left:4px solid transparent;border-right:4px solid transparent;border-bottom:7px solid #777"></div>
<div class="a" style="left:1044px;top:288px;width:12px;height:14px;background:#fff;border:1px solid #999;box-sizing:border-box"></div>
<div class="a" style="left:1044px;top:309px;width:12px;height:14px;background:#fff;border:1px solid #999;box-sizing:border-box"></div>
<span class="t cap" style="left:1061px;top:287px">search?event_submit_do_ne...</span><span class="t cap" style="left:1227px;top:287px">200</span><span class="t cap" style="left:1283px;top:287px">xhr</span><span class="t cap" style="left:1338px;top:287px;text-decoration:underline">ajax-min.js:1</span><span class="t cap" style="left:1438px;top:287px;width:39px;text-align:right">6.3 KB</span><span class="t cap" style="left:1490px;top:287px;width:42px;text-align:right">185 ms</span>
<span class="t cap" style="left:1061px;top:308px">search?event_submit_do_ne...</span><span class="t cap" style="left:1227px;top:308px">200</span><span class="t cap" style="left:1283px;top:308px">xhr</span><span class="t cap" style="left:1338px;top:308px;text-decoration:underline">index.js:4</span><span class="t cap" style="left:1438px;top:308px;width:39px;text-align:right">4.5 KB</span><span class="t cap" style="left:1490px;top:308px;width:42px;text-align:right">162 ms</span>
<div class="a" style="left:1550px;top:283px;width:2px;height:159px;background:linear-gradient(90deg,#5a5ae6 50%,#d05a9a 50%)"></div>
<div class="a" style="left:1551px;top:288px;width:6px;height:13px;background:linear-gradient(90deg,#12b560 30%,#0aa3e6 30%)"></div>
<div class="a" style="left:1890px;top:309px;width:5px;height:13px;background:linear-gradient(90deg,#12b560 50%,#0aa3e6 50%)"></div>

<!-- status -->
<div class="a" style="left:1039px;top:441px;width:881px;height:20px;background:#f3f3f3;border-top:1px solid #ccc;border-bottom:1px solid #ccc;box-sizing:border-box"></div>
<span class="t st" style="left:1043px">2 / 51 requests</span><span class="t st" style="left:1125px;color:#aaa">|</span><span class="t st" style="left:1134px">10.8 KB / 299 KB transferred</span><span class="t st" style="left:1282px;color:#aaa">|</span><span class="t st" style="left:1291px">Finish: 27.96 s</span><span class="t st" style="left:1368px;color:#aaa">|</span><span class="t st" style="left:1377px;color:#1a1aee">DOMContentLoaded: 162 ms</span><span class="t st" style="left:1535px;color:#aaa">|</span><span class="t st" style="left:1544px;color:#ee1a1a">Load: 227 ms</span>

<!-- preview tabs -->
<div class="a" style="left:1039px;top:461px;width:881px;height:27px;background:#f8f8f8;border-bottom:1px solid #ccc;box-sizing:border-box"></div>
<div class="a" style="left:1113px;top:463px;width:51px;height:25px;background:#fff;border:1px solid #ccc;border-bottom:none;box-sizing:border-box"></div>
<svg class="a" style="left:1045px;top:471px" width="9" height="9"><path d="M1 1l6 6M7 1L1 7" stroke="#777" stroke-width="1.6"/></svg>
<span class="t" style="left:1065px;top:468px;color:#555">Headers</span><span class="t" style="left:1118px;top:468px;color:#333">Preview</span><span class="t" style="left:1170px;top:468px;color:#555">Response</span><span class="t" style="left:1229px;top:468px;color:#555">Cookies</span><span class="t" style="left:1281px;top:468px;color:#555">Timing</span>

<!-- json -->
<div class="a" style="left:1904px;top:488px;width:16px;height:104px;background:#f1f1f1"></div>
<div class="a" style="left:1908px;top:495px;border-left:4px solid transparent;border-right:4px solid transparent;border-bottom:5px solid #a0a0a0"></div>
<div class="a" style="left:1904px;top:505px;width:16px;height:87px;background:#bdbdbd"></div>
<div class="tri" style="left:1044px;top:498px"></div>
<div class="m" style="left:1056px;top:494px">{totalPage: "100", RN: "daeb4d623571d64da4a0bfa80ac73a79", result: "true", catmap: "", ppath: "",…}</div>
<div class="m" style="left:1066px;top:508px"><b>RN</b>: <u>"daeb4d623571d64da4a0bfa80ac73a79"</u></div>
<div class="m" style="left:1066px;top:522px"><b>catmap</b>: <u>""</u></div>
<div class="m" style="left:1066px;top:536px"><b>defaultViewType</b>: <u>""</u></div>
<div class="tri" style="left:1057px;top:554px"></div>
<div class="m" style="left:1066px;top:550px"><b>listItem</b>: [{title: "<span>漫娜儿雪纺白色时尚宽松衬衣</span>", sold: "71677", commentCount: "21066", item_id: "544593334904",…},…]</div>
<div class="tri" style="left:1067px;top:568px"></div>
<div class="m" style="left:1078px;top:564px"><b>0</b>: {title: "<span>漫娜儿雪纺白色时尚宽松衬衣</span>", sold: "71677", commentCount: "21066", item_id: "544593334904",…}</div>
<div class="m" style="left:1090px;top:578px"><b>act</b>: <u>"71677"</u></div>
<svg class="a" style="left:1010px;top:515px" width="80" height="50"><path d="M6.7 7.7L56.7 26.7 71 41 53.3 41z" fill="#0a0a0a"/></svg>
</body></html>
